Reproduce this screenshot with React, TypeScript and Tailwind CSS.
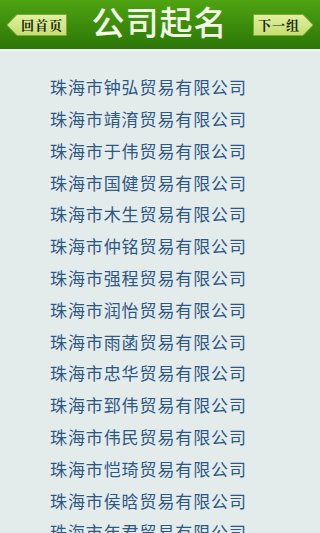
import React from "react";

const names = [
  "珠海市钟弘贸易有限公司",
  "珠海市靖淯贸易有限公司",
  "珠海市于伟贸易有限公司",
  "珠海市国健贸易有限公司",
  "珠海市木生贸易有限公司",
  "珠海市仲铭贸易有限公司",
  "珠海市强程贸易有限公司",
  "珠海市润怡贸易有限公司",
  "珠海市雨菡贸易有限公司",
  "珠海市忠华贸易有限公司",
  "珠海市郅伟贸易有限公司",
  "珠海市伟民贸易有限公司",
  "珠海市恺琦贸易有限公司",
  "珠海市侯晗贸易有限公司",
  "珠海市年君贸易有限公司",
];

function ArrowButton({ label, dir }: { label: string; dir: "left" | "right" }) {
  const points =
    dir === "left"
      ? "11,0.5 60.5,0.5 60.5,21.5 11,21.5 0.8,11"
      : "0.5,0.5 50,0.5 60.2,11 50,21.5 0.5,21.5";
  return (
    <div className="relative w-[61px] h-[22px] flex items-center">
      <svg className="absolute inset-0" width="61" height="22" viewBox="0 0 61 22">
        <defs>
          <linearGradient id={`g-${dir}`} x1="0" y1="0" x2="0" y2="1">
            <stop offset="0" stopColor="#e2f0a0" />
            <stop offset="1" stopColor="#c4de70" />
          </linearGradient>
        </defs>
        <polygon points={points} fill={`url(#g-${dir})`} stroke="#7fa83a" strokeWidth="1" />
      </svg>
      <span
        className={`relative w-full text-[13px] font-bold text-[#1b2a0c] tracking-[1px] leading-none ${
          dir === "left" ? "pl-[15px]" : "pl-[5px]"
        }`}
        style={{ fontFamily: '"Noto Serif CJK SC", "Noto Sans CJK SC", serif' }}
      >
        {label}
      </span>
    </div>
  );
}

export default function App() {
  return (
    <div className="w-[320px] h-[533px] overflow-hidden bg-[#e4ebeb]" style={{ fontFamily: '"Noto Sans CJK SC", sans-serif' }}>
      <div className="h-[49px] bg-gradient-to-b from-[#4fa412] to-[#2b7607] flex items-center justify-between px-[6px]">
        <ArrowButton label="回首页" dir="left" />
        <div className="h-[49px] flex items-start pt-[1px]">
          <div className="text-[33px] font-medium text-[#f2f9e6] leading-[40px] tracking-[1px] -ml-[1px]">公司起名</div>
        </div>
        <ArrowButton label="下一组" dir="right" />
      </div>
      <div className="h-[2px] bg-[#f2f5f5]" />
      <div className="pt-[20px] pl-[50px] flex flex-col items-start">
        {names.map((n) => (
          <div key={n} className="h-[31.8px] flex items-center text-[17px] text-[#2d5884] tracking-[0.9px]">
            {n}
          </div>
        ))}
      </div>
    </div>
  );
}
